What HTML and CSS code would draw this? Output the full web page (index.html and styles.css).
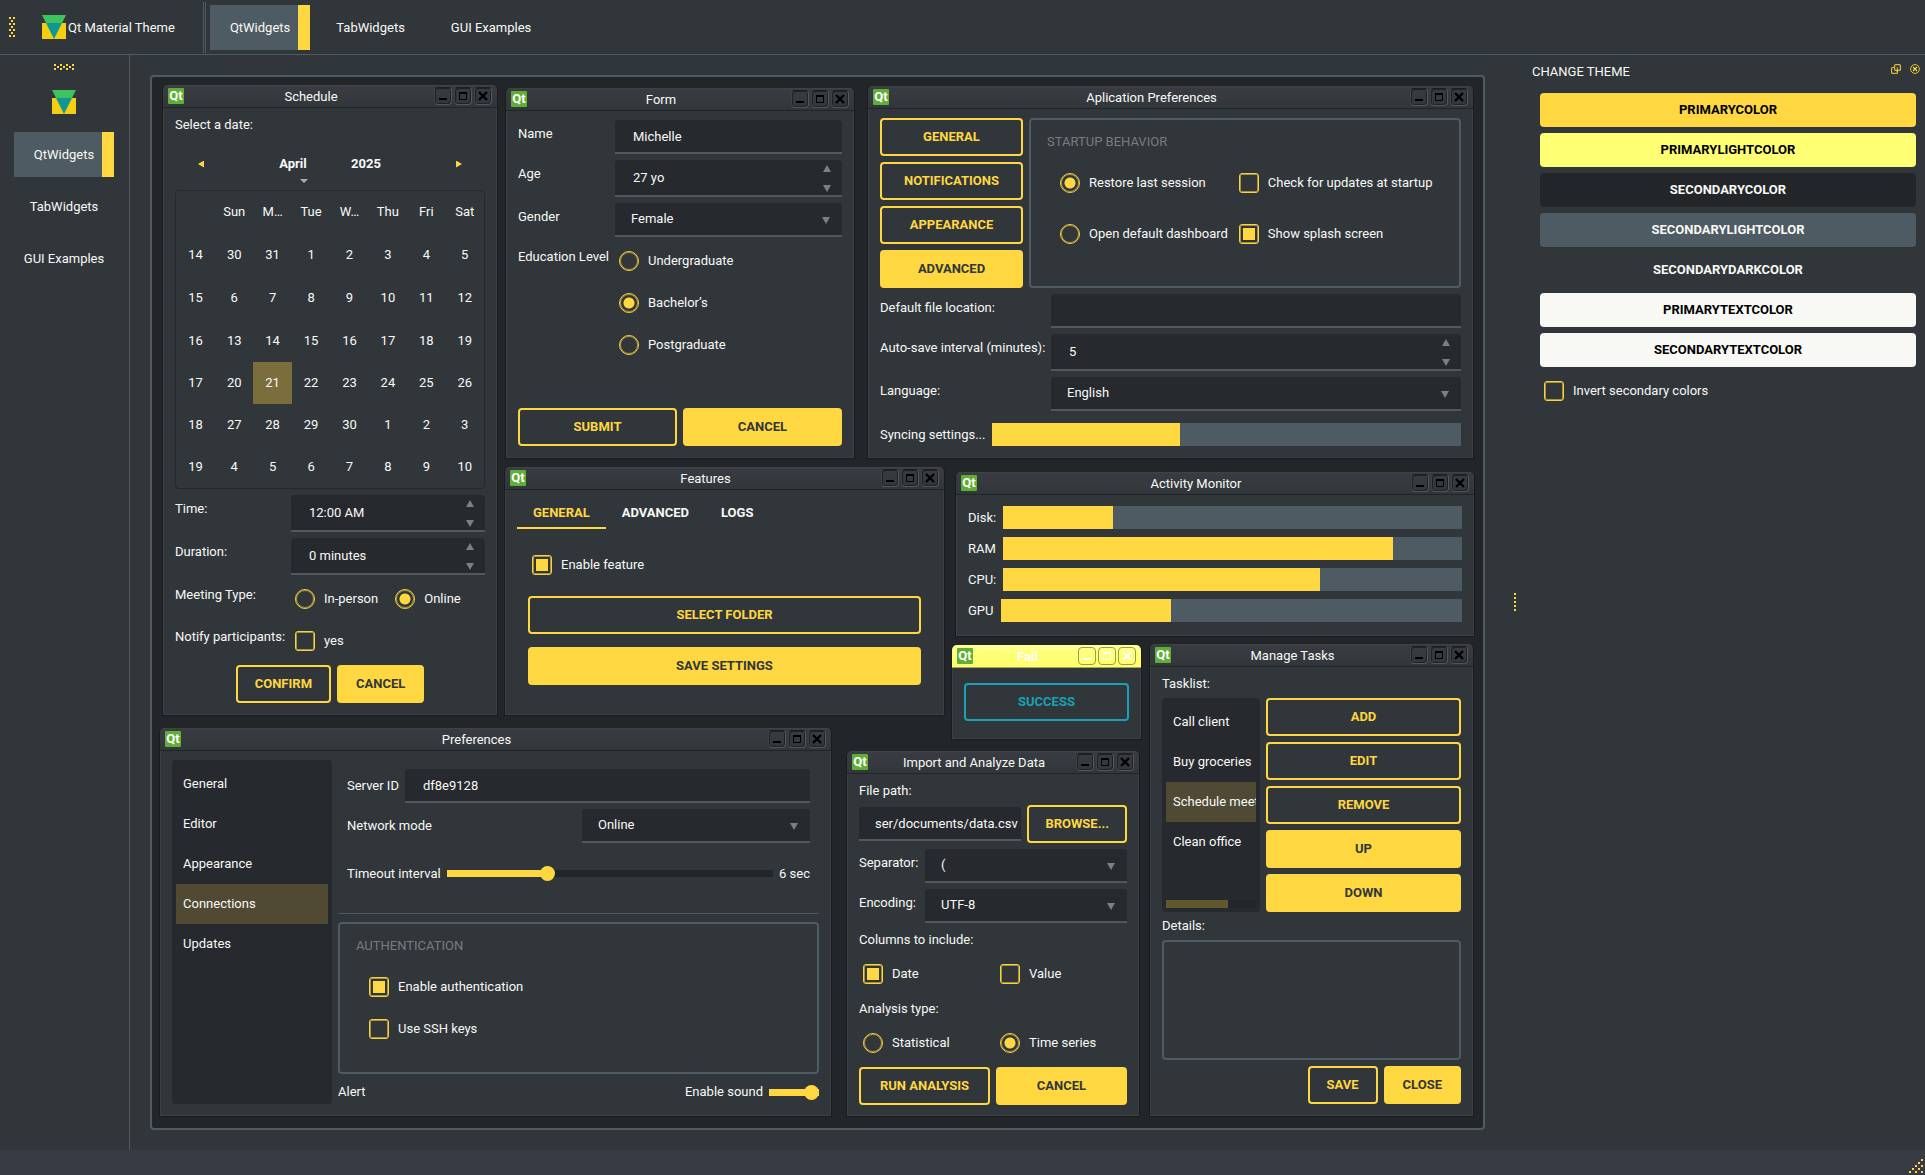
FILE: index.html
```html
<!DOCTYPE html>
<html lang="en">
<head>
<meta charset="utf-8">
<title>Qt Material Theme</title>
<link rel="stylesheet" href="styles.css">
</head>
<body>
<svg class="defs" aria-hidden="true">
  <symbol id="logo" viewBox="0 0 24 24">
    <path fill="#f5ce10" d="M0 8h24v16H0z"/>
    <path fill="#3fc35f" d="M0 0h24l-4 8H4z"/>
    <path fill="#0f9796" d="M4 8h16l-8 16z"/>
  </symbol>
  <symbol id="min" viewBox="0 0 18 18"><path fill="currentColor" d="M5 11h8v2H5z"/></symbol>
  <symbol id="max" viewBox="0 0 18 18"><path fill="none" stroke="currentColor" stroke-width="1" d="M5.500 5.500h7v7h-7z"/><path fill="currentColor" d="M5 5h8v2H5z"/></symbol>
  <symbol id="close" viewBox="0 0 18 18"><path fill="none" stroke="currentColor" stroke-width="2.400" d="M5 5l8 8M13 5l-8 8"/></symbol>
</svg>

<div class="app">
  <header class="toolbar">
    <svg class="grip" width="6" height="20" viewBox="0 0 6 20"><path fill="#ffd740" d="M0 0h2v2H0zM4 0h2v2H4zM2 3h2v2H2zM0 6h2v2H0zM4 6h2v2H4zM2 9h2v2H2zM0 12h2v2H0zM4 12h2v2H4zM2 15h2v2H2zM0 18h2v2H0zM4 18h2v2H4z"/></svg>
    <div class="brand"><svg width="24" height="24"><use href="#logo"/></svg><span>Qt Material Theme</span></div>
    <nav class="topnav">
      <button class="navtab active">QtWidgets</button>
      <button class="navtab">TabWidgets</button>
      <button class="navtab">GUI Examples</button>
    </nav>
  </header>

  <aside class="sidebar">
    <svg width="20" height="6" viewBox="0 0 20 6"><path fill="#ffd740" d="M0 0h2v2H0zM0 4h2v2H0zM3 2h2v2H3zM6 0h2v2H6zM6 4h2v2H6zM9 2h2v2H9zM12 0h2v2h-2zM12 4h2v2h-2zM15 2h2v2h-2zM18 0h2v2h-2zM18 4h2v2h-2z"/></svg>
    <svg class="sidelogo" width="24" height="24"><use href="#logo"/></svg>
    <nav class="sidenav">
      <button class="navtab active">QtWidgets</button>
      <button class="navtab">TabWidgets</button>
      <button class="navtab">GUI Examples</button>
    </nav>
  </aside>

  <main class="mdi">
    <section class="window w-schedule">
      <div class="titlebar"><span class="qt">Qt</span><h2>Schedule</h2>
        <button aria-label="Minimize"><svg><use href="#min"/></svg></button><button aria-label="Maximize"><svg><use href="#max"/></svg></button><button aria-label="Close"><svg><use href="#close"/></svg></button></div>
      <div class="client">
        <p class="line">Select a date:</p>
        <div class="calnav">
          <button class="arrow prev" aria-label="Previous month"></button>
          <button class="month">April</button>
          <button class="year">2025</button>
          <button class="arrow next" aria-label="Next month"></button>
        </div>
        <div class="calendar">
          <table>
            <thead><tr><th></th><th>Sun</th><th>M…</th><th>Tue</th><th>W…</th><th>Thu</th><th>Fri</th><th>Sat</th></tr></thead>
            <tbody>
              <tr><th>14</th><td>30</td><td>31</td><td>1</td><td>2</td><td>3</td><td>4</td><td>5</td></tr>
              <tr><th>15</th><td>6</td><td>7</td><td>8</td><td>9</td><td>10</td><td>11</td><td>12</td></tr>
              <tr><th>16</th><td>13</td><td>14</td><td>15</td><td>16</td><td>17</td><td>18</td><td>19</td></tr>
              <tr><th>17</th><td>20</td><td class="selected">21</td><td>22</td><td>23</td><td>24</td><td>25</td><td>26</td></tr>
              <tr><th>18</th><td>27</td><td>28</td><td>29</td><td>30</td><td>1</td><td>2</td><td>3</td></tr>
              <tr><th>19</th><td>4</td><td>5</td><td>6</td><td>7</td><td>8</td><td>9</td><td>10</td></tr>
            </tbody>
          </table>
        </div>
        <div class="form">
          <label for="time">Time:</label>
          <div class="spin"><input id="time" type="text" value="12:00 AM"><button class="up" aria-label="Increase"></button><button class="down" aria-label="Decrease"></button></div>
          <label for="duration">Duration:</label>
          <div class="spin"><input id="duration" type="text" value="0 minutes"><button class="up" aria-label="Increase"></button><button class="down" aria-label="Decrease"></button></div>
          <span class="caption">Meeting Type:</span>
          <div class="options">
            <label class="check"><input type="radio" name="meeting">In-person</label>
            <label class="check"><input type="radio" name="meeting" checked>Online</label>
          </div>
          <span class="caption">Notify participants:</span>
          <label class="check"><input type="checkbox">yes</label>
        </div>
        <div class="buttons center"><button class="btn">CONFIRM</button><button class="btn solid">CANCEL</button></div>
      </div>
    </section>

    <section class="window w-form">
      <div class="titlebar"><span class="qt">Qt</span><h2>Form</h2>
        <button aria-label="Minimize"><svg><use href="#min"/></svg></button><button aria-label="Maximize"><svg><use href="#max"/></svg></button><button aria-label="Close"><svg><use href="#close"/></svg></button></div>
      <div class="client">
        <div class="form">
          <label for="name">Name</label>
          <input class="field" id="name" type="text" value="Michelle">
          <label for="age">Age</label>
          <div class="spin"><input id="age" type="text" value="27 yo"><button class="up" aria-label="Increase"></button><button class="down" aria-label="Decrease"></button></div>
          <label for="gender">Gender</label>
          <div class="combo"><select id="gender"><option>Female</option><option>Male</option></select></div>
          <span class="caption">Education Level</span>
          <div class="stack">
            <label class="check"><input type="radio" name="edu">Undergraduate</label>
            <label class="check"><input type="radio" name="edu" checked>Bachelor’s</label>
            <label class="check"><input type="radio" name="edu">Postgraduate</label>
          </div>
        </div>
        <div class="buttons fill bottom"><button class="btn">SUBMIT</button><button class="btn solid">CANCEL</button></div>
      </div>
    </section>

    <section class="window w-appprefs">
      <div class="titlebar"><span class="qt">Qt</span><h2>Aplication Preferences</h2>
        <button aria-label="Minimize"><svg><use href="#min"/></svg></button><button aria-label="Maximize"><svg><use href="#max"/></svg></button><button aria-label="Close"><svg><use href="#close"/></svg></button></div>
      <div class="client">
        <div class="startup">
          <div class="stack">
            <button class="btn">GENERAL</button>
            <button class="btn">NOTIFICATIONS</button>
            <button class="btn">APPEARANCE</button>
            <button class="btn solid">ADVANCED</button>
          </div>
          <fieldset class="group">
            <legend>STARTUP BEHAVIOR</legend>
            <div class="startup-options">
              <label class="check"><input type="radio" name="startup" checked>Restore last session</label>
              <label class="check"><input type="checkbox">Check for updates at startup</label>
              <label class="check"><input type="radio" name="startup">Open default dashboard</label>
              <label class="check"><input type="checkbox" checked>Show splash screen</label>
            </div>
          </fieldset>
        </div>
        <div class="form">
          <label for="location">Default file location:</label>
          <input class="field" id="location" type="text">
          <label for="autosave">Auto-save interval (minutes):</label>
          <div class="spin"><input id="autosave" type="text" value="5"><button class="up" aria-label="Increase"></button><button class="down" aria-label="Decrease"></button></div>
          <label for="language">Language:</label>
          <div class="combo"><select id="language"><option>English</option></select></div>
        </div>
        <div class="meter bottom"><label for="sync">Syncing settings...</label><progress id="sync" max="100" value="40"></progress></div>
      </div>
    </section>

    <section class="window w-features">
      <div class="titlebar"><span class="qt">Qt</span><h2>Features</h2>
        <button aria-label="Minimize"><svg><use href="#min"/></svg></button><button aria-label="Maximize"><svg><use href="#max"/></svg></button><button aria-label="Close"><svg><use href="#close"/></svg></button></div>
      <div class="client">
        <div class="tabs"><button class="active">GENERAL</button><button>ADVANCED</button><button>LOGS</button></div>
        <div class="pane">
          <label class="check"><input type="checkbox" checked>Enable feature</label>
          <button class="btn">SELECT FOLDER</button>
          <button class="btn solid">SAVE SETTINGS</button>
        </div>
      </div>
    </section>

    <section class="window w-activity">
      <div class="titlebar"><span class="qt">Qt</span><h2>Activity Monitor</h2>
        <button aria-label="Minimize"><svg><use href="#min"/></svg></button><button aria-label="Maximize"><svg><use href="#max"/></svg></button><button aria-label="Close"><svg><use href="#close"/></svg></button></div>
      <div class="client meters">
        <div class="meter"><label for="disk">Disk:</label><progress id="disk" max="100" value="24"></progress></div>
        <div class="meter"><label for="ram">RAM</label><progress id="ram" max="100" value="85"></progress></div>
        <div class="meter"><label for="cpu">CPU:</label><progress id="cpu" max="100" value="69"></progress></div>
        <div class="meter"><label for="gpu">GPU</label><progress id="gpu" max="100" value="37"></progress></div>
      </div>
    </section>

    <section class="window w-fail current">
      <div class="titlebar"><span class="qt">Qt</span><h2>Fail</h2>
        <button aria-label="Minimize"><svg><use href="#min"/></svg></button><button aria-label="Maximize"><svg><use href="#max"/></svg></button><button aria-label="Close"><svg><use href="#close"/></svg></button></div>
      <div class="client"><button class="btn success">SUCCESS</button></div>
    </section>

    <section class="window w-tasks">
      <div class="titlebar"><span class="qt">Qt</span><h2>Manage Tasks</h2>
        <button aria-label="Minimize"><svg><use href="#min"/></svg></button><button aria-label="Maximize"><svg><use href="#max"/></svg></button><button aria-label="Close"><svg><use href="#close"/></svg></button></div>
      <div class="client">
        <p class="line">Tasklist:</p>
        <div class="tasks">
          <div class="list">
            <ul><li>Call client</li><li>Buy groceries</li><li class="selected">Schedule meeting</li><li>Clean office</li></ul>
            <div class="scroll"><span></span></div>
          </div>
          <div class="stack">
            <button class="btn">ADD</button>
            <button class="btn">EDIT</button>
            <button class="btn">REMOVE</button>
            <button class="btn solid">UP</button>
            <button class="btn solid">DOWN</button>
          </div>
        </div>
        <label class="line" for="details">Details:</label>
        <textarea id="details"></textarea>
        <div class="buttons end"><button class="btn">SAVE</button><button class="btn solid">CLOSE</button></div>
      </div>
    </section>

    <section class="window w-prefs">
      <div class="titlebar"><span class="qt">Qt</span><h2>Preferences</h2>
        <button aria-label="Minimize"><svg><use href="#min"/></svg></button><button aria-label="Maximize"><svg><use href="#max"/></svg></button><button aria-label="Close"><svg><use href="#close"/></svg></button></div>
      <div class="client split">
        <div class="list">
          <ul><li>General</li><li>Editor</li><li>Appearance</li><li class="selected">Connections</li><li>Updates</li></ul>
        </div>
        <div class="connection">
          <div class="network">
            <div class="row"><label for="server">Server ID</label><input class="field grow" id="server" type="text" value="df8e9128"></div>
            <div class="row between"><label for="mode">Network mode</label><div class="combo mode"><select id="mode"><option>Online</option></select></div></div>
            <div class="row timeout"><label for="timeout">Timeout interval</label><input class="grow" id="timeout" type="range" min="0" max="20" value="6" style="--value:30%"><span>6 sec</span></div>
          </div>
          <hr>
          <fieldset class="group auth">
            <legend>AUTHENTICATION</legend>
            <div class="stack">
              <label class="check"><input type="checkbox" checked>Enable authentication</label>
              <label class="check"><input type="checkbox">Use SSH keys</label>
            </div>
          </fieldset>
          <div class="row alert"><span class="grow">Alert</span><label for="sound">Enable sound</label><input id="sound" type="range" min="0" max="1" value="1" style="--value:100%"></div>
        </div>
      </div>
    </section>

    <section class="window w-import">
      <div class="titlebar"><span class="qt">Qt</span><h2>Import and Analyze Data</h2>
        <button aria-label="Minimize"><svg><use href="#min"/></svg></button><button aria-label="Maximize"><svg><use href="#max"/></svg></button><button aria-label="Close"><svg><use href="#close"/></svg></button></div>
      <div class="client">
        <label class="line" for="path">File path:</label>
        <div class="row"><input class="field path grow" id="path" type="text" value="ser/documents/data.csv"><button class="btn">BROWSE...</button></div>
        <div class="form">
          <label for="separator">Separator:</label>
          <div class="combo"><select id="separator"><option>(</option></select></div>
          <label for="encoding">Encoding:</label>
          <div class="combo"><select id="encoding"><option>UTF-8</option></select></div>
        </div>
        <p class="line tall">Columns to include:</p>
        <div class="halves">
          <label class="check"><input type="checkbox" checked>Date</label>
          <label class="check"><input type="checkbox">Value</label>
        </div>
        <p class="line tall">Analysis type:</p>
        <div class="halves">
          <label class="check"><input type="radio" name="analysis">Statistical</label>
          <label class="check"><input type="radio" name="analysis" checked>Time series</label>
        </div>
        <div class="buttons fill bottom"><button class="btn">RUN ANALYSIS</button><button class="btn solid">CANCEL</button></div>
      </div>
    </section>
  </main>

  <div class="splitter"><svg width="2" height="18" viewBox="0 0 2 18"><path fill="#ffd740" d="M0 0h2v2H0zM0 4h2v2H0zM0 8h2v2H0zM0 12h2v2H0zM0 16h2v2H0z"/></svg></div>

  <aside class="dock">
    <div class="dockhead">
      <h2>CHANGE THEME</h2>
      <button aria-label="Float"><svg width="10" height="10" viewBox="0 0 10 10"><path fill="none" stroke="#d9b93c" stroke-width="1.200" d="M6.400 3.600V6.400a1 1 0 0 1-1 1M3.500 3.500H1.600a1 1 0 0 0-1 1v3.900a1 1 0 0 0 1 1h3.900a1 1 0 0 0 1-1V6.400M4.600.6h3.800a1 1 0 0 1 1 1v3.800a1 1 0 0 1-1 1H4.600a1 1 0 0 1-1-1V1.600a1 1 0 0 1 1-1z"/></svg></button>
      <button aria-label="Close"><svg width="10" height="10" viewBox="0 0 10 10"><circle cx="5" cy="5" r="4.400" fill="none" stroke="#e5c23e"/><path fill="none" stroke="#ffd740" stroke-width="1.200" d="M3 3l4 4M7 3l-4 4"/></svg></button>
    </div>
    <div class="swatches">
      <button class="swatch primary">PRIMARYCOLOR</button>
      <button class="swatch primary-light">PRIMARYLIGHTCOLOR</button>
      <button class="swatch secondary">SECONDARYCOLOR</button>
      <button class="swatch secondary-light">SECONDARYLIGHTCOLOR</button>
      <button class="swatch secondary-dark">SECONDARYDARKCOLOR</button>
      <button class="swatch text">PRIMARYTEXTCOLOR</button>
      <button class="swatch text">SECONDARYTEXTCOLOR</button>
      <label class="check"><input type="checkbox">Invert secondary colors</label>
    </div>
  </aside>

  <footer class="status">
    <svg width="14" height="14" viewBox="0 0 14 14"><path fill="#ffd740" d="M12 0h2v2h-2zM9 3h2v2H9zM12 6h2v2h-2zM6 6h2v2H6zM3 9h2v2H3zM9 9h2v2H9zM0 12h2v2H0zM6 12h2v2H6zM12 12h2v2h-2z"/></svg>
  </footer>
</div>
</body>
</html>
```
FILE: styles.css
```css
:root {
  --primary: #ffd740;
  --primary-light: #ffff74;
  --secondary: #232629;
  --light: #4f5b62;
  --dark: #31363b;
  --field: #26292e;
  --line: #54575b;
  --text: #f8f9f5;
}

* { box-sizing: border-box; }

body {
  margin: 0;
  background: var(--dark);
  color: var(--text);
  font: 13px/16px Roboto, "Liberation Sans", sans-serif;
}

button, input, select, textarea { font: inherit; color: inherit; }
button { padding: 0; border: 0; background: none; }
h2, p, ul, fieldset, hr { margin: 0; padding: 0; }
h2 { font-size: 13px; font-weight: 400; }
svg { display: block; }
.defs { position: absolute; width: 0; height: 0; }

/* application frame */
.app {
  display: grid;
  grid-template: 55px 1fr 25px / 130px 1fr 42px 397px;
  min-height: 100vh;
}

.toolbar {
  grid-column: 1 / -1;
  display: flex;
  align-items: center;
  border-bottom: 1px solid var(--light);
  padding-left: 9px;
}
.brand { display: flex; align-items: center; gap: 2px; margin: 0 28px 0 27px; }
.brand span { padding-top: 2px; }
.topnav {
  display: flex;
  align-items: center;
  gap: 6px;
  height: 51px;
  padding-left: 4px;
  border-left: 3px double var(--light);
}
.navtab { height: 45px; padding: 0 20px; }
.topnav .navtab { padding-top: 2px; }
.navtab.active { background: linear-gradient(to left, var(--primary) 12px, var(--light) 12px); }

.sidebar {
  display: flex;
  flex-direction: column;
  align-items: center;
  padding: 9px 1px 0 0;
  border-right: 1px solid var(--line);
}
.sidelogo { margin: 20px 0 18px; }
.sidenav { display: flex; flex-direction: column; gap: 7px; width: 100px; }
.sidenav .navtab { padding: 0; }

.mdi {
  position: relative;
  margin: 20px 1px 20px 20px;
  border: 2px solid var(--light);
  border-radius: 4px;
  background: var(--secondary);
  overflow: hidden;
}

.splitter { display: flex; justify-content: center; align-items: center; padding: 0 0 2px 16px; }

.dock { padding: 8px 5px 0 4px; }
.dockhead { display: flex; align-items: flex-start; gap: 9px; }
.dockhead h2 { flex: 1; line-height: 18px; }
.dockhead button { padding-top: 1px; }
.swatches { display: flex; flex-direction: column; gap: 6px; padding: 12px 4px 0 8px; }
.swatch { height: 34px; border-radius: 4px; font-weight: 700; }
.swatch.primary { background: var(--primary); color: #000; }
.swatch.primary-light { background: var(--primary-light); color: #000; }
.swatch.secondary { background: var(--secondary); }
.swatch.secondary-light { background: var(--light); }
.swatch.text { background: var(--text); color: #000; }

.status {
  grid-column: 1 / -1;
  display: flex;
  justify-content: flex-end;
  align-items: flex-end;
  padding: 2px;
  background: #383b44;
}

/* windows placed freely on the desktop */
.window {
  position: absolute;
  display: flex;
  flex-direction: column;
  border: 1px solid #191c1e;
  border-top: 0;
  border-radius: 5px 5px 0 0;
  background: var(--dark);
  box-shadow: inset 1px -1px #3c4045, inset -1px 0 #3c4045;
}
.w-schedule { left: 10px; top: 8px; width: 336px; height: 631px; }
.w-form { left: 353px; top: 11px; width: 350px; height: 371px; }
.w-appprefs { left: 715px; top: 9px; width: 607px; height: 373px; }
.w-features { left: 352px; top: 390px; width: 441px; height: 249px; }
.w-activity { left: 803px; top: 395px; width: 520px; height: 165px; }
.w-fail { left: 799px; top: 568px; width: 191px; height: 95px; }
.w-tasks { left: 997px; top: 567px; width: 325px; height: 473px; }
.w-prefs { left: 7px; top: 651px; width: 673px; height: 389px; }
.w-import { left: 694px; top: 674px; width: 294px; height: 366px; }

.titlebar {
  display: flex;
  align-items: center;
  gap: 2px;
  height: 23px;
  flex: none;
  padding: 0 5px;
  border-bottom: 1px solid #222528;
  border-radius: 5px 5px 0 0;
  background: linear-gradient(#41454a, #383b41 2px, #363a3f 50%, #31363b);
}
.titlebar h2 { flex: 1; text-align: center; padding: 2px 0 0 4px; }
.titlebar button {
  width: 18px;
  height: 18px;
  border: 1px solid #54585c;
  border-top-color: #1c1f22;
  border-left-color: #3e4246;
  border-radius: 4px;
  box-shadow: inset 1px 1px #202326, inset -1px -1px #202326;
  color: #000;
}
.titlebar button svg { width: 18px; height: 18px; margin: -1px; }
.qt {
  width: 16px;
  height: 16px;
  border-radius: 1px;
  background: #5fae35;
  color: #fff;
  font-size: 13px;
  font-weight: 700;
  line-height: 15px;
  text-align: center;
}
.current .titlebar { background: linear-gradient(#ffff98, #ffff74 50%, #ffff6c); color: #fff; border-bottom-color: #a5a55c; }
.current .titlebar h2 { font-weight: 700; }
.current .titlebar button { border-color: #9a9a50; box-shadow: none; color: #fff; }

.client {
  flex: 1;
  display: flex;
  flex-direction: column;
  gap: 6px;
  padding: 9px 12px 12px;
  min-height: 0;
}
.bottom { margin-top: auto; }
.line { height: 16px; }
.line.tall { height: 21px; line-height: 21px; }
.stack { display: flex; flex-direction: column; gap: 6px; }
.row { display: flex; align-items: center; gap: 6px; }
.between { justify-content: space-between; }
.grow { flex: 1; min-width: 0; }
.halves { display: grid; grid-template-columns: 1fr 1fr; gap: 6px; }

/* buttons */
.btn {
  height: 38px;
  padding: 0 16px;
  border: 2px solid var(--primary);
  border-radius: 4px;
  color: var(--primary);
  font-weight: 700;
}
.btn.solid { background: var(--primary); color: var(--dark); }
.btn.success { border-color: #17a2b8; color: #17a2b8; margin-top: 6px; }
.buttons { display: flex; gap: 6px; }
.buttons.center { justify-content: center; }
.buttons.end { justify-content: flex-end; }
.buttons .btn { padding: 0 17px; }
.buttons.fill .btn { flex: 1 1 0; padding: 0; }

/* fields */
.form { display: grid; grid-template-columns: auto 1fr; gap: 6px; }
.form > label:not(.check), .caption { line-height: 27px; align-self: start; white-space: nowrap; }
.w-schedule .form { grid-template-columns: 110px 1fr; }
.w-form .form { grid-template-columns: 91px 1fr; }
.w-appprefs .form { grid-template-columns: 165px 1fr; }
.w-import .form { grid-template-columns: 60px 1fr; }

.field, .spin input, .combo select {
  width: 100%;
  height: 34px;
  padding: 0 4px 0 18px;
  border: 0;
  border-bottom: 2px solid var(--line);
  border-radius: 4px 4px 0 0;
  background: var(--field);
  outline: 0;
}
.field.path { padding: 0 0 0 16px; }
.combo, .spin { position: relative; }
.combo select { display: block; appearance: none; padding-left: 16px; }
.spin input { display: block; height: 37px; }
.combo::after, .spin .up, .spin .down {
  content: "";
  position: absolute;
  right: 11px;
  width: 8px;
  height: 7px;
  background: #7d8082;
  clip-path: polygon(0 0, 100% 0, 50% 100%);
}
.combo::after { right: 12px; top: 14px; pointer-events: none; }
.spin .up { top: 5px; clip-path: polygon(50% 0, 100% 100%, 0 100%); }
.spin .down { bottom: 5px; }

textarea {
  flex: 1;
  border: 2px solid var(--light);
  border-radius: 4px;
  background: none;
  resize: none;
  outline: 0;
}

.check { display: flex; align-items: center; gap: 9px; height: 36px; padding-left: 4px; white-space: nowrap; }
.check input {
  appearance: none;
  flex: none;
  width: 20px;
  height: 20px;
  margin: 0;
  border: 1px solid #f8d240;
  border-radius: 3px;
  box-shadow: inset 0 0 0 1px #a8923d;
}
.check input[type="radio"] { border-radius: 50%; }
.check input:checked { background: var(--primary); background-clip: content-box; padding: 3px; }
.check input[type="radio"]:checked { background: radial-gradient(circle, var(--primary) 5px, transparent 6px); }
.options { display: flex; gap: 13px; }

/* groups */
.group {
  min-width: 0;
  border: 2px solid var(--light);
  border-radius: 4px;
  padding: 13px 16px 0;
}
.group legend { float: left; width: 100%; padding: 0; color: #797c7f; line-height: 18px; }

/* progress and sliders */
.meter { display: flex; align-items: center; gap: 7px; }
progress {
  appearance: none;
  flex: 1;
  min-width: 0;
  height: 23px;
  border: 0;
  background: var(--light);
}
progress::-webkit-progress-bar { background: var(--light); }
progress::-webkit-progress-value { background: var(--primary); }
.meters { padding-top: 11px; gap: 8px; }

input[type="range"] {
  appearance: none;
  height: 15px;
  margin: 0;
  background: linear-gradient(to right, var(--primary) var(--value), var(--secondary) var(--value)) center / 100% 7px no-repeat;
}
input[type="range"]::-webkit-slider-thumb {
  appearance: none;
  width: 15px;
  height: 15px;
  border-radius: 50%;
  background: var(--primary);
}

/* schedule */
.calnav {
  display: grid;
  grid-template-columns: 52px 1fr 1fr 52px;
  align-items: center;
  height: 45px;
  padding-top: 5px;
}
.calnav .arrow { justify-self: center; width: 6px; height: 7px; background: var(--primary); }
.prev { clip-path: polygon(100% 0, 100% 100%, 0 50%); }
.next { clip-path: polygon(0 0, 100% 50%, 0 100%); }
.month, .year { height: 40px; font-weight: 700; }
.month { position: relative; padding-left: 29px; }
.month::after {
  content: "";
  position: absolute;
  right: 22px;
  bottom: 1px;
  width: 8px;
  height: 4px;
  background: #adafb1;
  clip-path: polygon(0 0, 100% 0, 50% 100%);
}
.year { padding-right: 31px; }
.calendar { border: 1px solid #25292d; border-radius: 4px; }
.calendar table { width: 100%; table-layout: fixed; border-collapse: collapse; text-align: center; }
.calendar th, .calendar td { height: 42px; padding: 0; font-weight: 400; }
.calendar thead th { height: 42px; }
.calendar tbody tr:nth-child(-n+3) > * { height: 43px; }
.calendar tr > :first-child { width: 39px; }
.calendar .selected { background: #7b6e3c; }

/* application preferences */
.startup { display: grid; grid-template-columns: 143px 1fr; gap: 6px; }
.startup-options {
  clear: both;
  display: grid;
  grid-template-columns: auto 1fr;
  gap: 15px 7px;
  padding: 14px 9px 0;
}

/* features */
.tabs { display: flex; height: 30px; }
.tabs button { padding: 0 16px; border-bottom: 2px solid transparent; font-weight: 700; }
.tabs .active { color: var(--primary); border-bottom-color: var(--primary); }
.pane { display: flex; flex-direction: column; gap: 13px; padding: 12px 11px 0; }

/* lists */
.list {
  display: flex;
  flex-direction: column;
  justify-content: space-between;
  min-width: 0;
  padding: 4px;
  border-radius: 4px;
  background: var(--field);
}
.list ul { list-style: none; overflow: hidden; }
.list li { height: 40px; padding-left: 7px; line-height: 40px; white-space: nowrap; }
.list .selected { background: #504a34; }
.scroll { height: 8px; background: var(--secondary); }
.scroll span { display: block; width: 69%; height: 8px; background: #625830; }
.tasks { display: grid; grid-template-columns: 98px 1fr; gap: 6px; }

/* preferences */
.split { display: grid; grid-template-columns: 160px 1fr; }
.connection { display: flex; flex-direction: column; gap: 6px; }
.network { display: flex; flex-direction: column; gap: 6px; padding: 9px; }
.mode { width: 228px; }
.timeout { height: 49px; }
hr { border: 0; border-top: 1px solid var(--line); margin-bottom: 2px; }
.auth { flex: 1; }
.auth .stack { clear: both; padding: 14px 9px 0; }
.alert { height: 24px; }
.alert input { width: 50px; }
```
